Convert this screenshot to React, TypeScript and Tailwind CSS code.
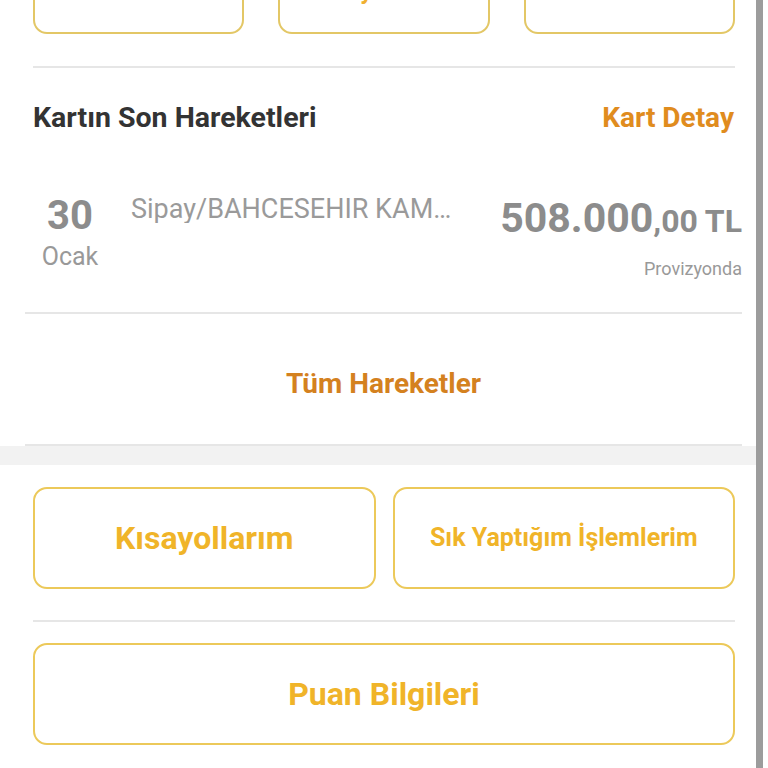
export default function App() {
  return (
    <div className="flex h-[768px] w-[768px] overflow-hidden bg-white font-['Roboto','Liberation_Sans',sans-serif]">
      <div className="flex w-[756px] flex-col">
        {/* üstteki hızlı işlem butonları (kesik) */}
        <div className="-mt-[66px] grid grid-cols-3 gap-[34px] pl-[33px] pr-[21px]">
          <div className="flex h-[100px] items-start justify-center rounded-[14px] border-2 border-[#e3c766] pt-[20px] text-[24px] leading-[28px] font-bold text-[#f0b030]">
            Limit
          </div>
          <div className="flex h-[100px] items-start justify-center rounded-[14px] border-2 border-[#e3c766] pt-[41px] text-[24px] leading-[28px] font-bold text-[#f0b030]">
            Kolay Ödeme
          </div>
          <div className="flex h-[100px] items-start justify-center rounded-[14px] border-2 border-[#e3c766] pt-[20px] text-[24px] leading-[28px] font-bold text-[#f0b030]">
            Borç Öde
          </div>
        </div>
        <div className="ml-[33px] mr-[21px] mt-[32px] h-[2px] bg-[#e6e6e6]" />

        <div className="mt-[34px] flex items-center justify-between pl-[33px] pr-[22px]">
          <span className="text-[28.5px] leading-[32px] font-bold text-[#333333]">Kartın Son Hareketleri</span>
          <span className="text-[28px] leading-[32px] font-bold text-[#e08c1e]">Kart Detay</span>
        </div>

        <div className="mt-[62px] flex items-start pl-[42px] pr-[14px]">
          <div className="flex w-[56px] flex-col items-center">
            <span className="text-[40px] leading-[40px] font-bold text-[#8c8c8c]">30</span>
            <span className="mt-[7px] text-[25px] leading-[28px] text-[#999999]">Ocak</span>
          </div>
          <span className="ml-[33px] mt-[-1px] w-[332px] truncate text-[27px] leading-[28px] text-[#9a9a9a]">
            Sipay/BAHCESEHIR KAMPUS
          </span>
          <div className="ml-auto mt-[2px] flex flex-col items-end">
            <div className="flex items-baseline text-[#8c8c8c]">
              <span className="text-[41px] leading-[40px] font-bold">508.000</span>
              <span className="text-[32px] leading-[40px] font-bold">,00</span>
              <span className="ml-[7px] text-[32px] leading-[40px] font-bold">TL</span>
            </div>
            <span className="mt-[18px] text-[18px] leading-[20px] text-[#999999]">Provizyonda</span>
          </div>
        </div>

        <div className="ml-[25px] mr-[14px] mt-[33px] h-[2px] bg-[#e6e6e6]" />
        <div className="ml-[25px] mr-[14px] flex h-[130px] items-center justify-center pt-[10px]">
          <span className="text-[28px] font-bold text-[#d4811f]">Tüm Hareketler</span>
        </div>
        <div className="ml-[25px] mr-[14px] h-[2px] bg-[#e6e6e6]" />
        <div className="h-[19px] bg-[#f2f2f2]" />

        <div className="mt-[22px] grid grid-cols-2 gap-[17px] pl-[33px] pr-[21px]">
          <div className="flex h-[102px] items-center justify-center rounded-[14px] border-2 border-[#ecc95a] text-[32px] font-bold text-[#f0b429]">
            Kısayollarım
          </div>
          <div className="flex h-[102px] items-center justify-center rounded-[14px] border-2 border-[#ecc95a] text-[25px] font-bold text-[#f0b429]">
            Sık Yaptığım İşlemlerim
          </div>
        </div>
        <div className="ml-[33px] mr-[21px] mt-[31px] h-[2px] bg-[#e6e6e6]" />
        <div className="ml-[33px] mr-[21px] mt-[21px] flex h-[102px] items-center justify-center rounded-[14px] border-2 border-[#ecc95a] text-[32px] font-bold text-[#f0b429]">
          Puan Bilgileri
        </div>
      </div>
      <div className="w-[7px] bg-[#9c9c9c]" />
      <div className="w-[5px] bg-white" />
    </div>
  );
}
